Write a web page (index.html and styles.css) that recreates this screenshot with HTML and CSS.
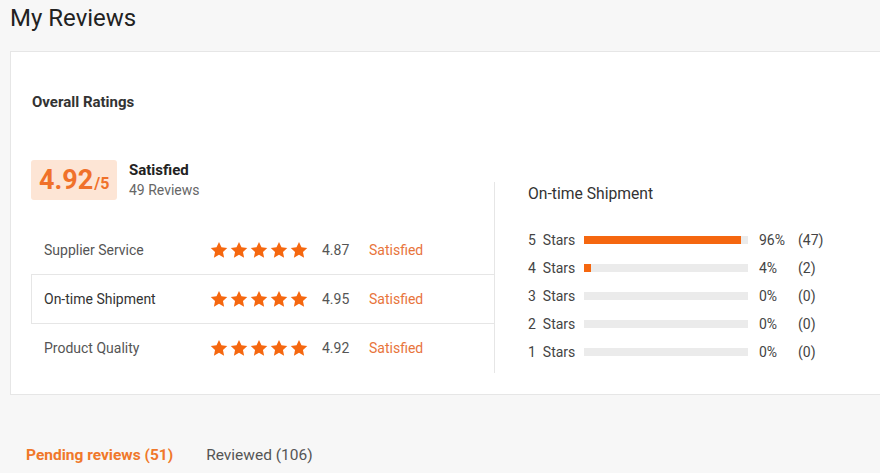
FILE: index.html
```html
<!DOCTYPE html>
<html>
<head>
<meta charset="utf-8">
<link rel="stylesheet" href="styles.css">
</head>
<body>
<svg width="0" height="0" class="defs">
  <defs>
    <symbol id="star" viewBox="0 0 24 24">
      <path d="M12 1.2l3.3 7.1 7.7.9-5.7 5.3 1.5 7.7L12 18.4l-6.8 3.8 1.5-7.7L1 9.2l7.7-.9z"/>
    </symbol>
  </defs>
</svg>
<h1 class="page-title">My Reviews</h1>
<section class="card">
  <h2 class="card-title">Overall Ratings</h2>
  <div class="summary">
    <div class="left">
      <div class="score">
        <div class="score-box"><span class="big">4.92</span><span class="small">/5</span></div>
        <div class="score-meta">
          <div class="score-label">Satisfied</div>
          <div class="score-count">49 Reviews</div>
        </div>
      </div>
      <div class="rows">
        <div class="row">
          <span class="row-label">Supplier Service</span>
          <span class="stars"><svg><use href="#star"/></svg><svg><use href="#star"/></svg><svg><use href="#star"/></svg><svg><use href="#star"/></svg><svg><use href="#star"/></svg></span>
          <span class="row-score">4.87</span>
          <span class="row-status">Satisfied</span>
        </div>
        <div class="row active">
          <span class="row-label">On-time Shipment</span>
          <span class="stars"><svg><use href="#star"/></svg><svg><use href="#star"/></svg><svg><use href="#star"/></svg><svg><use href="#star"/></svg><svg><use href="#star"/></svg></span>
          <span class="row-score">4.95</span>
          <span class="row-status">Satisfied</span>
        </div>
        <div class="row">
          <span class="row-label">Product Quality</span>
          <span class="stars"><svg><use href="#star"/></svg><svg><use href="#star"/></svg><svg><use href="#star"/></svg><svg><use href="#star"/></svg><svg><use href="#star"/></svg></span>
          <span class="row-score">4.92</span>
          <span class="row-status">Satisfied</span>
        </div>
      </div>
    </div>
    <div class="right">
      <div class="dist-title">On-time Shipment</div>
      <div class="dist">
        <div class="dist-row"><span class="dist-label">5&nbsp; Stars</span><span class="track"><span class="fill" style="width:96%"></span></span><span class="pct">96%</span><span class="cnt">(47)</span></div>
        <div class="dist-row"><span class="dist-label">4&nbsp; Stars</span><span class="track"><span class="fill" style="width:4%"></span></span><span class="pct">4%</span><span class="cnt">(2)</span></div>
        <div class="dist-row"><span class="dist-label">3&nbsp; Stars</span><span class="track"><span class="fill" style="width:0%"></span></span><span class="pct">0%</span><span class="cnt">(0)</span></div>
        <div class="dist-row"><span class="dist-label">2&nbsp; Stars</span><span class="track"><span class="fill" style="width:0%"></span></span><span class="pct">0%</span><span class="cnt">(0)</span></div>
        <div class="dist-row"><span class="dist-label">1&nbsp; Stars</span><span class="track"><span class="fill" style="width:0%"></span></span><span class="pct">0%</span><span class="cnt">(0)</span></div>
      </div>
    </div>
  </div>
</section>
<nav class="tabs">
  <span class="tab current">Pending reviews (51)</span>
  <span class="tab">Reviewed (106)</span>
</nav>
</body>
</html>
```
FILE: styles.css
```css
html, body {
  margin: 0;
  padding: 0;
}
body {
  background: #f7f7f7;
  font-family: Roboto, "Liberation Sans", Arial, sans-serif;
  color: #333;
  width: 880px;
  height: 473px;
  overflow: hidden;
}
.defs {
  position: absolute;
  width: 0;
  height: 0;
}
.page-title {
  margin: 0;
  padding-left: 10px;
  font-size: 24px;
  font-weight: 400;
  line-height: 36px;
  color: #222;
}
.card {
  margin: 15px 0 0 10px;
  width: 900px;
  box-sizing: border-box;
  height: 344px;
  background: #fff;
  border: 1px solid #e6e6e6;
  padding: 40px 0 0 20px;
}
.card-title {
  margin: 0 0 0 1px;
  font-size: 15px;
  font-weight: 700;
  line-height: 20px;
  color: #333;
}
.summary {
  display: flex;
  align-items: flex-end;
  margin-top: 48px;
}
.left {
  width: 464px;
}
.score {
  display: flex;
  align-items: center;
  gap: 12px;
  height: 40px;
}
.score-box {
  width: 86px;
  height: 40px;
  box-sizing: border-box;
  background: #fde5d5;
  border-radius: 3px;
  padding-left: 8px;
  color: #f0712a;
  font-weight: 700;
  display: flex;
  align-items: baseline;
  line-height: 40px;
}
.score-box .big {
  font-size: 27px;
}
.score-box .small {
  font-size: 16px;
  margin-left: 1px;
}
.score-label {
  font-size: 15px;
  font-weight: 700;
  line-height: 20px;
  color: #222;
}
.score-count {
  font-size: 14px;
  line-height: 20px;
  color: #666;
}
.rows {
  margin-top: 25px;
}
.row {
  display: flex;
  align-items: center;
  height: 50px;
  box-sizing: border-box;
  padding-left: 12px;
  font-size: 14px;
  border: 1px solid transparent;
  border-right: none;
}
.row + .row {
  margin-top: -1px;
}
.row.active {
  border: 1px solid #e6e6e6;
  color: #333;
}
.row-label {
  width: 166px;
  color: #555;
}
.row.active .row-label {
  color: #333;
}
.stars {
  display: flex;
  gap: 2px;
  width: 112px;
}
.stars svg {
  width: 18px;
  height: 18px;
  fill: #f5670f;
}
.row-score {
  width: 47px;
  color: #555;
}
.row-status {
  color: #e8743b;
}
.right {
  margin-left: -1px;
  border-left: 1px solid #e6e6e6;
  height: 191px;
  padding: 2px 0 0 33px;
  box-sizing: border-box;
  flex: 1;
}
.dist-title {
  font-size: 15.7px;
  line-height: 20px;
  color: #333;
}
.dist {
  margin-top: 22px;
}
.dist-row {
  display: flex;
  align-items: center;
  height: 28px;
  font-size: 14px;
  color: #444;
}
.dist-label {
  width: 56px;
}
.track {
  width: 164px;
  height: 8px;
  background: #ebebeb;
  display: block;
}
.fill {
  display: block;
  height: 100%;
  background: #f5670f;
}
.pct {
  margin-left: 11px;
  width: 39px;
}
.tabs {
  display: flex;
  gap: 33px;
  padding: 50px 0 0 26px;
  font-size: 15.5px;
  line-height: 20px;
}
.tab {
  color: #555;
}
.tab.current {
  color: #f0782a;
  font-weight: 700;
}
```
